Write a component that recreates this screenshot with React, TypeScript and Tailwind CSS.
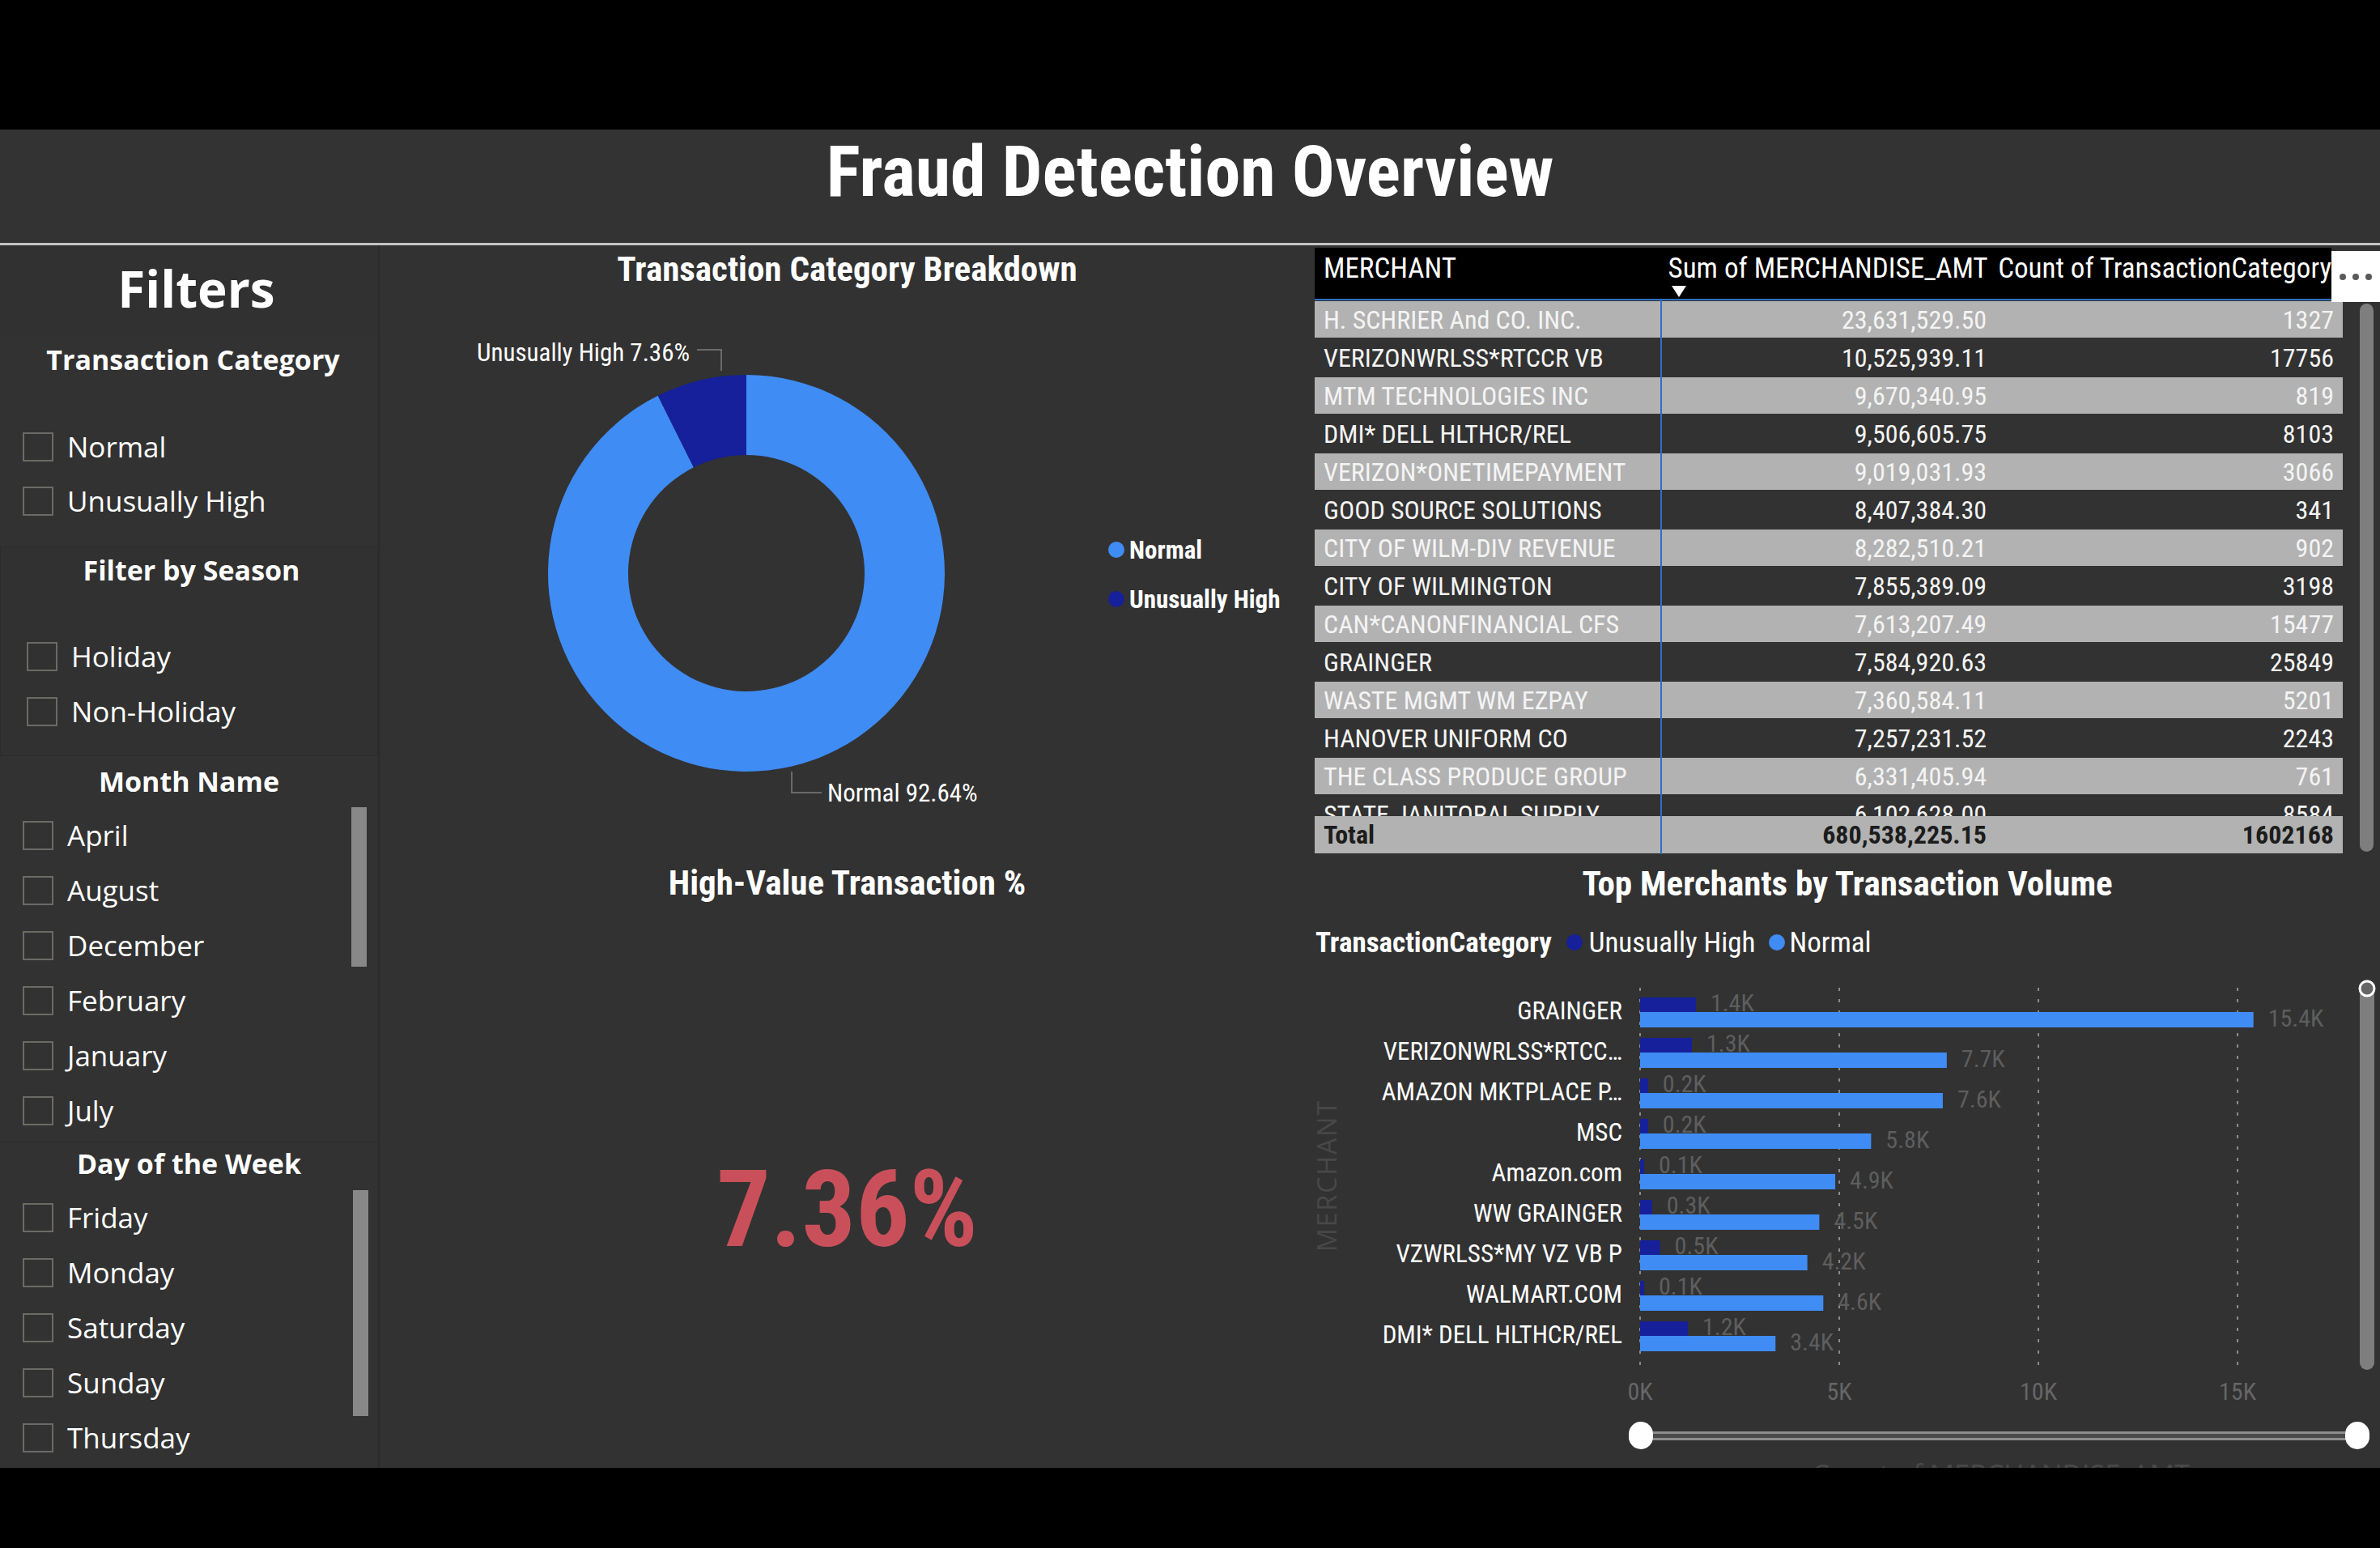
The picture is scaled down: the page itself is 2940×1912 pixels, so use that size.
// Fraud Detection Overview — Power BI style dashboard: slicers on the left,
// donut + KPI card in the middle, merchant table and bar chart on the right.

const din = "[font-family:'Roboto_Condensed','Liberation_Sans_Narrow',Roboto,sans-serif] [font-stretch:condensed]";
const segoe = "[font-family:'Open_Sans','Noto_Sans',sans-serif]";

const NORMAL = "#3f8cf5";
const HIGH = "#16209a";

function Check({ label }: { label: string }) {
  return (
    <div className="flex h-[37px] items-center gap-[17px]">
      <span className="h-[36px] w-[38px] shrink-0 border-2 border-[#6c6a66]" />
      <span className={`${segoe} text-[35px] leading-none text-white`}>{label}</span>
    </div>
  );
}

function SlicerTitle({ children, h }: { children: string; h: string }) {
  return (
    <div className={`flex ${h} items-center justify-center`}>
      <h3 className={`${segoe} text-[34px] font-bold leading-none text-white`}>{children}</h3>
    </div>
  );
}

function FilterPanel() {
  return (
    <aside className="flex w-[469px] shrink-0 flex-col border-r-2 border-[#2b2b2b]">
      {/* Panel heading */}
      <div className="h-[113px] bg-[#313131]">
        <div className="flex h-[106px] items-center justify-center pl-[18px]">
          <h2 className={`${segoe} text-[62px] font-bold leading-none text-white`}>Filters</h2>
        </div>
      </div>

      {/* Transaction Category */}
      <section className="h-[259px]">
        <SlicerTitle h="h-[56px] pl-[10px]">Transaction Category</SlicerTitle>
        <div className="mt-[61px] flex flex-col gap-[30px] pl-[28px]">
          <Check label="Normal" />
          <Check label="Unusually High" />
        </div>
      </section>

      {/* Season */}
      <section className="h-[259px] border border-[#2c2c2c] bg-[#313131]">
        <SlicerTitle h="h-[56px] pl-[6px]">Filter by Season</SlicerTitle>
        <div className="mt-[60px] flex flex-col gap-[31px] pl-[32px]">
          <Check label="Holiday" />
          <Check label="Non-Holiday" />
        </div>
      </section>

      {/* Month */}
      <section className="relative mt-[4px] h-[472px]">
        <SlicerTitle h="h-[54px]">Month Name</SlicerTitle>
        <div className="mt-[21px] flex flex-col gap-[31px] pl-[28px]">
          {["April", "August", "December", "February", "January", "July"].map((m) => (
            <Check key={m} label={m} />
          ))}
        </div>
        <div className="absolute left-[434px] top-[59px] h-[197px] w-[19px] bg-[#888888]" />
      </section>

      {/* Day of week */}
      <section className="relative h-[403px] border-t border-[#2c2c2c]">
        <SlicerTitle h="h-[52px]">Day of the Week</SlicerTitle>
        <div className="mt-[22px] flex flex-col gap-[31px] pl-[28px]">
          {["Friday", "Monday", "Saturday", "Sunday", "Thursday"].map((d) => (
            <Check key={d} label={d} />
          ))}
        </div>
        <div className="absolute left-[436px] top-[59px] h-[279px] w-[19px] bg-[#888888]" />
      </section>
    </aside>
  );
}

function arc(cx: number, cy: number, R: number, r: number, a0: number, a1: number) {
  const p = (a: number, rad: number) => {
    const t = (a * Math.PI) / 180;
    return `${cx + rad * Math.sin(t)} ${cy - rad * Math.cos(t)}`;
  };
  const large = a1 - a0 > 180 ? 1 : 0;
  return `M ${p(a0, R)} A ${R} ${R} 0 ${large} 1 ${p(a1, R)} L ${p(a1, r)} A ${r} ${r} 0 ${large} 0 ${p(a0, r)} Z`;
}

function DonutChart() {
  const split = 360 * (1 - 0.0736);
  return (
    <svg width="1155" height="649" className="block">
      <path d={arc(453, 347, 245, 146, 0, split)} fill={NORMAL} />
      <path d={arc(453, 347, 245, 146, split, 360)} fill={HIGH} />

      {/* leader lines + data labels */}
      <polyline points="392,71 422,71 422,97" fill="none" stroke="#6a6a6a" strokeWidth="2" />
      <polyline points="509,592 509,618 546,618" fill="none" stroke="#6a6a6a" strokeWidth="2" />
      <text x="120" y="85" className={din} fontSize="31" fill="#ffffff">Unusually High 7.36%</text>
      <text x="553" y="629" className={din} fontSize="31" fill="#ffffff">Normal 92.64%</text>

      {/* legend */}
      <circle cx="910" cy="318" r="10" fill={NORMAL} />
      <text x="926" y="329" className={din} fontSize="31" fontWeight="700" fill="#ffffff">Normal</text>
      <circle cx="910" cy="379" r="10" fill={HIGH} />
      <text x="926" y="390" className={din} fontSize="31" fontWeight="700" fill="#ffffff">Unusually High</text>
    </svg>
  );
}

function MiddleColumn() {
  return (
    <div className="flex w-[1155px] shrink-0 flex-col">
      <section className="h-[707px]">
        <div className="flex h-[58px] items-center justify-center">
          <h3 className={`${din} text-[43px] font-bold leading-none text-white`}>Transaction Category Breakdown</h3>
        </div>
        <DonutChart />
      </section>

      <section className="flex h-[803px] flex-col items-center pt-[59px]">
        <h3 className={`${din} text-[43px] font-bold leading-none text-white`}>High-Value Transaction %</h3>
        <p className={`${din} mt-[316px] text-[132px] font-bold leading-none text-[#c9505a]`}>7.36%</p>
      </section>
    </div>
  );
}

const rows = [
  ["H. SCHRIER And CO. INC.", "23,631,529.50", "1327"],
  ["VERIZONWRLSS*RTCCR VB", "10,525,939.11", "17756"],
  ["MTM TECHNOLOGIES INC", "9,670,340.95", "819"],
  ["DMI* DELL HLTHCR/REL", "9,506,605.75", "8103"],
  ["VERIZON*ONETIMEPAYMENT", "9,019,031.93", "3066"],
  ["GOOD SOURCE SOLUTIONS", "8,407,384.30", "341"],
  ["CITY OF WILM-DIV REVENUE", "8,282,510.21", "902"],
  ["CITY OF WILMINGTON", "7,855,389.09", "3198"],
  ["CAN*CANONFINANCIAL CFS", "7,613,207.49", "15477"],
  ["GRAINGER", "7,584,920.63", "25849"],
  ["WASTE MGMT WM EZPAY", "7,360,584.11", "5201"],
  ["HANOVER UNIFORM CO", "7,257,231.52", "2243"],
  ["THE CLASS PRODUCE GROUP", "6,331,405.94", "761"],
  ["STATE JANITORAL SUPPLY", "6,102,628.00", "8584"],
];

function MerchantTable() {
  return (
    <section className="relative h-[752px] pt-[3px]">
      {/* header */}
      <div className={`${din} flex h-[63px] w-[1256px] items-start bg-black pt-[8px] text-[35px] leading-none text-white`}>
        <div className="w-[427px] pl-[11px]">MERCHANT</div>
        <div className="w-[413px] pl-[13px]">
          <div className="whitespace-nowrap">Sum of MERCHANDISE_AMT</div>
          <svg width="18" height="14" className="ml-[4px] mt-[4px] block">
            <path d="M0 0 H18 L9 14 Z" fill="#ffffff" />
          </svg>
        </div>
        <div className="flex-1 whitespace-nowrap pl-[11px]">Count of TransactionCategory</div>
      </div>
      <div className="h-[2px] w-[1256px] bg-[#2f6fc4]" />

      {/* body */}
      <div className="h-[637px] w-[1270px] overflow-hidden">
        {rows.map(([m, amt, cnt], i) => (
          <div key={m} className="h-[47px] py-[1px]">
            <div
              className={`${din} flex h-[45px] items-center text-[32px] leading-none text-[#f4f4f4] ${
                i % 2 === 0 ? "bg-[#b2b2b2]" : ""
              }`}
            >
              <div className="w-[427px] whitespace-nowrap pl-[11px]">{m}</div>
              <div className="w-[413px] pr-[10px] text-right">{amt}</div>
              <div className="flex-1 pr-[11px] text-right">{cnt}</div>
            </div>
          </div>
        ))}
      </div>

      {/* total */}
      <div className={`${din} flex h-[46px] w-[1270px] items-center bg-[#b2b2b2] text-[32px] font-bold leading-none text-[#1c1c1c]`}>
        <div className="w-[427px] pl-[11px]">Total</div>
        <div className="w-[413px] pr-[10px] text-right">680,538,225.15</div>
        <div className="flex-1 pr-[11px] text-right">1602168</div>
      </div>

      {/* column divider, scrollbar and the visual's "more options" tab */}
      <div className="absolute left-[427px] top-[66px] h-[686px] w-[2px] bg-[#2f6fc4]" />
      <div className="absolute left-[1291px] top-[72px] h-[677px] w-[17px] rounded-full bg-[#7e7e7e]" />
      <div className="absolute left-[1256px] top-[7px] flex h-[63px] w-[60px] items-center justify-center gap-[8px] bg-white">
        <span className="h-[8px] w-[8px] rounded-full bg-[#5a5a5a]" />
        <span className="h-[8px] w-[8px] rounded-full bg-[#5a5a5a]" />
        <span className="h-[8px] w-[8px] rounded-full bg-[#5a5a5a]" />
      </div>
    </section>
  );
}

const bars: [string, number, number][] = [
  ["GRAINGER", 1.4, 15.4],
  ["VERIZONWRLSS*RTCC…", 1.3, 7.7],
  ["AMAZON MKTPLACE P…", 0.2, 7.6],
  ["MSC", 0.2, 5.8],
  ["Amazon.com", 0.1, 4.9],
  ["WW GRAINGER", 0.3, 4.5],
  ["VZWRLSS*MY VZ VB P", 0.5, 4.2],
  ["WALMART.COM", 0.1, 4.6],
  ["DMI* DELL HLTHCR/REL", 1.2, 3.4],
];

function BarChart() {
  const x0 = 402;
  const k = 49.2; // px per 1K
  const ticks = [0, 5, 10, 15];
  return (
    <svg width="1316" height="540" className="block">
      {ticks.map((t) => (
        <g key={t}>
          <line x1={x0 + t * k} x2={x0 + t * k} y1="20" y2="493" stroke="#8a8a8a" strokeWidth="2" strokeDasharray="4 10" />
          <text x={x0 + t * k} y="529" textAnchor="middle" className={din} fontSize="30" fill="#666666">
            {t}K
          </text>
        </g>
      ))}

      {bars.map(([name, hi, norm], i) => {
        const yHi = 32 + 50 * i;
        const yN = 50 + 50 * i;
        return (
          <g key={name} className={din} fontSize="31">
            <text x="380" y={51 + 50 * i} textAnchor="end" dominantBaseline="middle" fill="#ffffff">
              {name}
            </text>
            <rect x={x0} y={yHi} width={Math.max(hi * k, 3)} height="18" fill={HIGH} />
            <rect x={x0} y={yN} width={norm * k} height="19" fill={NORMAL} />
            <text x={x0 + hi * k + 18} y={yHi + 9} dominantBaseline="middle" fontSize="30" fill="#5e5e5e">
              {hi.toFixed(1)}K
            </text>
            <text x={x0 + norm * k + 18} y={yN + 10} dominantBaseline="middle" fontSize="30" fill="#5e5e5e">
              {norm.toFixed(1)}K
            </text>
          </g>
        );
      })}

      <text
        x="18"
        y="252"
        transform="rotate(-90 18 252)"
        textAnchor="middle"
        dominantBaseline="middle"
        className={segoe}
        fontSize="32"
        letterSpacing="2"
        fill="#484848"
      >
        MERCHANT
      </text>

      {/* vertical scrollbar */}
      <rect x="1291" y="10" width="18" height="482" rx="9" fill="#7e7e7e" />
      <circle cx="1300" cy="21" r="9" fill="#666666" stroke="#ffffff" strokeWidth="3" />
    </svg>
  );
}

function MerchantChart() {
  return (
    <section className="flex h-[758px] flex-col">
      <div className="flex justify-center pt-[15px]">
        <h3 className={`${din} text-[43px] font-bold leading-none text-white`}>Top Merchants by Transaction Volume</h3>
      </div>

      <div className={`${din} mt-[34px] flex h-[34px] items-center pl-[1px] text-[35px] leading-none text-white`}>
        <span className="font-bold">TransactionCategory</span>
        <span className="ml-[18px] h-[20px] w-[20px] rounded-full bg-[#16209a]" />
        <span className="ml-[8px]">Unusually High</span>
        <span className="ml-[16px] h-[20px] w-[20px] rounded-full bg-[#3f8cf5]" />
        <span className="ml-[6px]">Normal</span>
      </div>

      <div className="mt-[19px]">
        <BarChart />
      </div>

      {/* zoom slider */}
      <div className="ml-[388px] mt-[16px] flex h-[34px] w-[915px] items-center">
        <span className="h-[34px] w-[30px] shrink-0 rounded-full bg-white" />
        <span className="h-[11px] flex-1 border-y-[3px] border-[#8c8c8c] bg-[#4a4a4a]" />
        <span className="h-[34px] w-[30px] shrink-0 rounded-full bg-white" />
      </div>

      <div className={`${segoe} ml-[402px] mt-[14px] w-[891px] whitespace-nowrap text-center text-[34px] leading-none text-[#4a4a4a]`}>
        Count of MERCHANDISE_AMT
      </div>
    </section>
  );
}

function RightColumn() {
  return (
    <div className="flex flex-1 flex-col overflow-hidden">
      <MerchantTable />
      <MerchantChart />
    </div>
  );
}

export default function App() {
  return (
    <div className="flex h-[1912px] w-[2940px] flex-col overflow-hidden bg-black">
      <div className="h-[160px] shrink-0" />
      <header className="flex h-[140px] shrink-0 items-start justify-center bg-[#333333] pt-[8px]">
        <h1 className={`${din} text-[88px] font-bold leading-none text-white`}>Fraud Detection Overview</h1>
      </header>
      <div className="h-[3px] shrink-0 bg-[#c4c4c4]" />
      <main className="flex h-[1510px] shrink-0 overflow-hidden bg-[#323232]">
        <FilterPanel />
        <MiddleColumn />
        <RightColumn />
      </main>
      <div className="flex-1" />
    </div>
  );
}
